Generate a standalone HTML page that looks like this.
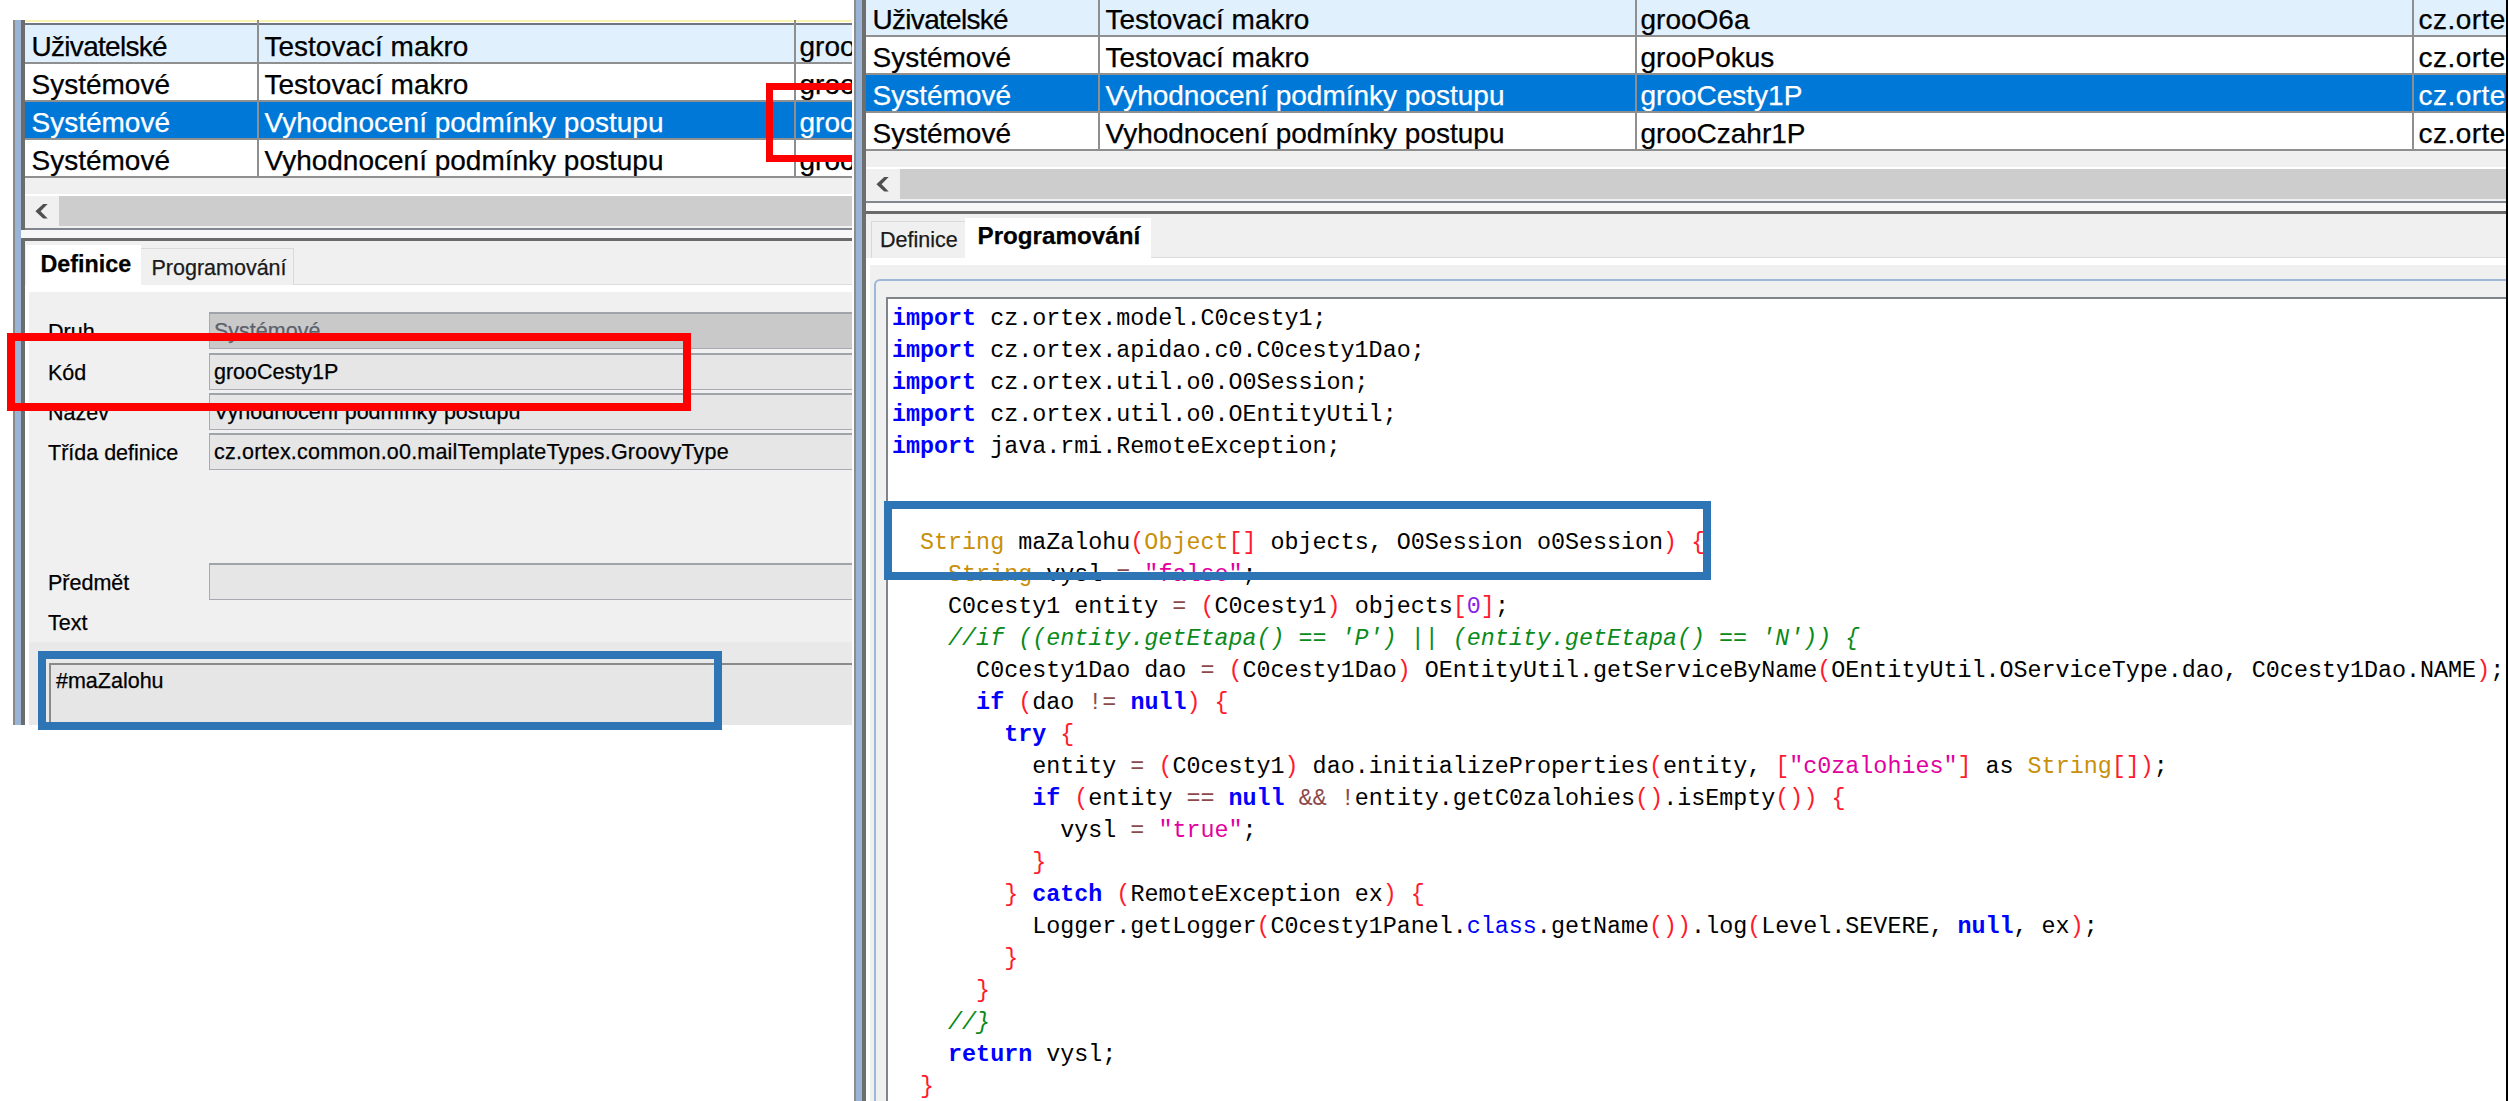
<!DOCTYPE html>
<html><head><meta charset="utf-8">
<style>
html,body{margin:0;padding:0;}
body{width:2508px;height:1101px;overflow:hidden;background:#fff;position:relative;font-family:"Liberation Sans",sans-serif;}
div{position:absolute;box-sizing:border-box;}
.t{white-space:pre;-webkit-text-stroke:0.25px currentColor;}
.code{font-family:"Liberation Mono",monospace;font-size:23.36px;line-height:32px;white-space:pre;color:#000;}
.k{color:#0000ff;font-weight:bold}
.kc{color:#0000ff}
.ty{color:#c8900a}
.p{color:#ff1a2e}
.s{color:#e2009f}
.n{color:#8a1fe8}
.op{color:#8b4a4a}
.c{color:#0a8a1a;font-style:italic}
</style></head><body>
<div style="left:0;top:0;width:852px;height:725px;overflow:hidden;">
<div style="left:13px;top:20px;width:2px;height:705px;background:#8a8a8a;"></div>
<div style="left:15px;top:20px;width:6.3px;height:705px;background:#9ab4d6;"></div>
<div style="left:21.3px;top:20px;width:3.7px;height:705px;background:#6c6c6c;"></div>
<div style="left:25px;top:20px;width:827px;height:2px;background:#fbf3b0;"></div>
<div style="left:25px;top:22.5px;width:827px;height:3.3px;background:#70757f;"></div>
<div style="left:25px;top:25px;width:827px;height:38px;background:#e0f1fd;"></div>
<div class="t" style="left:31.5px;top:32.8px;font-size:28px;line-height:28px;color:#000;font-weight:400;letter-spacing:-0.7px">Uživatelské</div>
<div class="t" style="left:264.5px;top:32.8px;font-size:28px;line-height:28px;color:#000;font-weight:400;">Testovací makro</div>
<div class="t" style="left:799.5px;top:32.8px;font-size:28px;line-height:28px;color:#000;font-weight:400;">grooO6a</div>
<div style="left:25px;top:63px;width:827px;height:38px;background:#ffffff;"></div>
<div class="t" style="left:31.5px;top:70.8px;font-size:28px;line-height:28px;color:#000;font-weight:400;">Systémové</div>
<div class="t" style="left:264.5px;top:70.8px;font-size:28px;line-height:28px;color:#000;font-weight:400;">Testovací makro</div>
<div class="t" style="left:799.5px;top:70.8px;font-size:28px;line-height:28px;color:#000;font-weight:400;">grooPokus</div>
<div style="left:25px;top:101px;width:827px;height:38px;background:#0078d7;"></div>
<div class="t" style="left:31.5px;top:108.8px;font-size:28px;line-height:28px;color:#fff;font-weight:400;">Systémové</div>
<div class="t" style="left:264.5px;top:108.8px;font-size:28px;line-height:28px;color:#fff;font-weight:400;">Vyhodnocení podmínky postupu</div>
<div class="t" style="left:799.5px;top:108.8px;font-size:28px;line-height:28px;color:#fff;font-weight:400;">grooCesty1P</div>
<div style="left:25px;top:139px;width:827px;height:38px;background:#ffffff;"></div>
<div class="t" style="left:31.5px;top:146.8px;font-size:28px;line-height:28px;color:#000;font-weight:400;">Systémové</div>
<div class="t" style="left:264.5px;top:146.8px;font-size:28px;line-height:28px;color:#000;font-weight:400;">Vyhodnocení podmínky postupu</div>
<div class="t" style="left:799.5px;top:146.8px;font-size:28px;line-height:28px;color:#000;font-weight:400;">grooCzahr1P</div>
<div style="left:25px;top:62px;width:827px;height:2px;background:#8f8f8f;"></div>
<div style="left:25px;top:100px;width:827px;height:2px;background:#8f8f8f;"></div>
<div style="left:25px;top:138px;width:827px;height:2px;background:#8f8f8f;"></div>
<div style="left:25px;top:176px;width:827px;height:2px;background:#8f8f8f;"></div>
<div style="left:257px;top:20px;width:2px;height:157px;background:#8f8f8f;"></div>
<div style="left:794px;top:20px;width:2px;height:157px;background:#8f8f8f;"></div>
<div style="left:25px;top:178px;width:827px;height:15.5px;background:#f0f0f0;"></div>
<div style="left:25px;top:193.5px;width:827px;height:2.5px;background:#ffffff;"></div>
<div style="left:25px;top:196px;width:34px;height:30px;background:#f0f0f0;"></div>
<div style="left:59px;top:196px;width:793px;height:30px;background:#cdcdcd;"></div>
<div style="left:25px;top:226px;width:827px;height:1.6px;background:#f0f0f0;"></div>
<div style="left:25px;top:227.6px;width:827px;height:2.4px;background:#82868e;"></div>
<div style="left:21.3px;top:230px;width:830.7px;height:8px;background:#f7f7f7;"></div>
<div style="left:25px;top:238px;width:827px;height:3px;background:#6a6a6a;"></div>
<div style="left:25px;top:241px;width:827px;height:44px;background:#f0f0f0;"></div>
<div style="left:25px;top:285px;width:827px;height:7px;background:#ffffff;"></div>
<div style="left:294px;top:284px;width:558px;height:1px;background:#dcdcdc;"></div>
<div style="left:141px;top:248px;width:153px;height:37px;background:#f0f0f0;border:1px solid #d9d9d9;border-left:none;border-bottom:none;"></div>
<div style="left:26px;top:245px;width:115px;height:47px;background:#ffffff;"></div>
<div class="t" style="left:40.5px;top:252.78px;font-size:23.3px;line-height:23.3px;color:#000;font-weight:700;">Definice</div>
<div class="t" style="left:151.5px;top:257.5px;font-size:21.5px;line-height:21.5px;color:#000;font-weight:400;color:#1a1a1a">Programování</div>
<div style="left:29px;top:292px;width:823px;height:433px;background:#f0f0f0;"></div>
<div style="left:209px;top:312px;width:700px;height:37px;background:#c9c9c9;border:1px solid #a7aab0;border-top:2px solid #a0a3aa;"></div>
<div class="t" style="left:214px;top:321.3px;font-size:21.5px;line-height:21.5px;color:#5c616b;font-weight:400;">Systémové</div>
<div style="left:209px;top:352.5px;width:700px;height:37px;background:#e6e6e6;border:1px solid #a7aab0;border-top:2px solid #a0a3aa;"></div>
<div class="t" style="left:214px;top:361.8px;font-size:21.5px;line-height:21.5px;color:#000;font-weight:400;">grooCesty1P</div>
<div style="left:209px;top:393px;width:700px;height:37px;background:#e6e6e6;border:1px solid #a7aab0;border-top:2px solid #a0a3aa;"></div>
<div class="t" style="left:214px;top:402.3px;font-size:21.5px;line-height:21.5px;color:#000;font-weight:400;">Vyhodnocení podmínky postupu</div>
<div style="left:209px;top:433px;width:700px;height:37px;background:#e6e6e6;border:1px solid #a7aab0;border-top:2px solid #a0a3aa;"></div>
<div class="t" style="left:214px;top:442.3px;font-size:21.5px;line-height:21.5px;color:#000;font-weight:400;letter-spacing:0.2px">cz.ortex.common.o0.mailTemplateTypes.GroovyType</div>
<div style="left:209px;top:562.5px;width:700px;height:37px;background:#e6e6e6;border:1px solid #a7aab0;border-top:2px solid #a0a3aa;"></div>
<div class="t" style="left:48px;top:321.8px;font-size:21.5px;line-height:21.5px;color:#000;font-weight:400;">Druh</div>
<div class="t" style="left:48px;top:362.6px;font-size:21.5px;line-height:21.5px;color:#000;font-weight:400;">Kód</div>
<div class="t" style="left:48px;top:402.8px;font-size:21.5px;line-height:21.5px;color:#000;font-weight:400;">Název</div>
<div class="t" style="left:48px;top:442.6px;font-size:21.5px;line-height:21.5px;color:#000;font-weight:400;">Třída definice</div>
<div class="t" style="left:48px;top:573.1px;font-size:21.5px;line-height:21.5px;color:#000;font-weight:400;">Předmět</div>
<div class="t" style="left:48px;top:612.6px;font-size:21.5px;line-height:21.5px;color:#000;font-weight:400;">Text</div>
<div style="left:29px;top:642px;width:823px;height:83px;background:#e9e9e9;"></div>
<div style="left:49px;top:663px;width:803px;height:70px;background:#e6e6e6;border-left:2px solid #8a8a8a;border-top:2px solid #8a8a8a;"></div>
<div class="t" style="left:56px;top:671.3px;font-size:21.5px;line-height:21.5px;color:#000;font-weight:400;">#maZalohu</div>
<div style="left:766px;top:83px;width:100px;height:79px;background:transparent;border:7.5px solid #ff0000;"></div>
<svg style="position:absolute;left:34.8px;top:203.8px" width="13" height="15" viewBox="0 0 13 15"><path d="M8.2 0 L12.7 0 L5.6 7.25 L12.7 14.5 L8.2 14.5 L0.4 7.25 Z" fill="#505050"/></svg>
</div>
<div style="left:854px;top:0px;width:2px;height:1101px;background:#8c8c8c;"></div>
<div style="left:856px;top:0px;width:6px;height:1101px;background:#9ab4d6;"></div>
<div style="left:862px;top:0px;width:4px;height:1101px;background:#6e6e6e;"></div>
<div style="left:866px;top:0;width:1640px;height:1101px;overflow:hidden;">
<div style="left:0px;top:-2px;width:1640px;height:38px;background:#e0f1fd;"></div>
<div class="t" style="left:6.5px;top:5.8px;font-size:28px;line-height:28px;color:#000;font-weight:400;letter-spacing:-0.7px">Uživatelské</div>
<div class="t" style="left:239.5px;top:5.8px;font-size:28px;line-height:28px;color:#000;font-weight:400;">Testovací makro</div>
<div class="t" style="left:774.5px;top:5.8px;font-size:28px;line-height:28px;color:#000;font-weight:400;">grooO6a</div>
<div class="t" style="left:1552.5px;top:5.8px;font-size:28px;line-height:28px;color:#000;font-weight:400;letter-spacing:0.45px">cz.ortex.groovy</div>
<div style="left:0px;top:36px;width:1640px;height:38px;background:#ffffff;"></div>
<div class="t" style="left:6.5px;top:43.8px;font-size:28px;line-height:28px;color:#000;font-weight:400;">Systémové</div>
<div class="t" style="left:239.5px;top:43.8px;font-size:28px;line-height:28px;color:#000;font-weight:400;">Testovací makro</div>
<div class="t" style="left:774.5px;top:43.8px;font-size:28px;line-height:28px;color:#000;font-weight:400;">grooPokus</div>
<div class="t" style="left:1552.5px;top:43.8px;font-size:28px;line-height:28px;color:#000;font-weight:400;letter-spacing:0.45px">cz.ortex.groovy</div>
<div style="left:0px;top:74px;width:1640px;height:38px;background:#0078d7;"></div>
<div class="t" style="left:6.5px;top:81.8px;font-size:28px;line-height:28px;color:#fff;font-weight:400;">Systémové</div>
<div class="t" style="left:239.5px;top:81.8px;font-size:28px;line-height:28px;color:#fff;font-weight:400;">Vyhodnocení podmínky postupu</div>
<div class="t" style="left:774.5px;top:81.8px;font-size:28px;line-height:28px;color:#fff;font-weight:400;">grooCesty1P</div>
<div class="t" style="left:1552.5px;top:81.8px;font-size:28px;line-height:28px;color:#fff;font-weight:400;letter-spacing:0.45px">cz.ortex.groovy</div>
<div style="left:0px;top:112px;width:1640px;height:38px;background:#ffffff;"></div>
<div class="t" style="left:6.5px;top:119.8px;font-size:28px;line-height:28px;color:#000;font-weight:400;">Systémové</div>
<div class="t" style="left:239.5px;top:119.8px;font-size:28px;line-height:28px;color:#000;font-weight:400;">Vyhodnocení podmínky postupu</div>
<div class="t" style="left:774.5px;top:119.8px;font-size:28px;line-height:28px;color:#000;font-weight:400;">grooCzahr1P</div>
<div class="t" style="left:1552.5px;top:119.8px;font-size:28px;line-height:28px;color:#000;font-weight:400;letter-spacing:0.45px">cz.ortex.groovy</div>
<div style="left:0px;top:35px;width:1640px;height:2px;background:#8f8f8f;"></div>
<div style="left:0px;top:73px;width:1640px;height:2px;background:#8f8f8f;"></div>
<div style="left:0px;top:111px;width:1640px;height:2px;background:#8f8f8f;"></div>
<div style="left:0px;top:149px;width:1640px;height:2px;background:#8f8f8f;"></div>
<div style="left:232px;top:-7px;width:2px;height:157px;background:#8f8f8f;"></div>
<div style="left:769px;top:-7px;width:2px;height:157px;background:#8f8f8f;"></div>
<div style="left:1546px;top:-7px;width:2px;height:157px;background:#8f8f8f;"></div>
<div style="left:0px;top:151px;width:1640px;height:15.5px;background:#f0f0f0;"></div>
<div style="left:0px;top:166.5px;width:1640px;height:2.5px;background:#ffffff;"></div>
<div style="left:0px;top:169px;width:34px;height:30px;background:#f0f0f0;"></div>
<div style="left:34px;top:169px;width:1606px;height:30px;background:#cdcdcd;"></div>
<svg style="position:absolute;left:9.600000000000023px;top:176.8px" width="13" height="15" viewBox="0 0 13 15"><path d="M8.2 0 L12.7 0 L5.6 7.25 L12.7 14.5 L8.2 14.5 L0.4 7.25 Z" fill="#505050"/></svg>
<div style="left:0px;top:199px;width:1640px;height:1.6px;background:#f0f0f0;"></div>
<div style="left:0px;top:200.6px;width:1640px;height:2.4px;background:#82868e;"></div>
<div style="left:-3.7000000000000455px;top:203px;width:1643.7px;height:8px;background:#f7f7f7;"></div>
<div style="left:0px;top:211px;width:1640px;height:3px;background:#6a6a6a;"></div>
<div style="left:0px;top:214px;width:1640px;height:44px;background:#f0f0f0;"></div>
<div style="left:0px;top:258px;width:1640px;height:7px;background:#ffffff;"></div>
<div style="left:285px;top:257px;width:1355px;height:1px;background:#dcdcdc;"></div>
<div style="left:5px;top:221px;width:93.5px;height:37px;background:#f0f0f0;border:1px solid #d9d9d9;border-right:none;border-bottom:none;"></div>
<div style="left:98.5px;top:218px;width:186.5px;height:47px;background:#ffffff;"></div>
<div class="t" style="left:14px;top:230.1px;font-size:21.5px;line-height:21.5px;color:#000;font-weight:400;color:#1a1a1a">Definice</div>
<div class="t" style="left:111.5px;top:224.31px;font-size:24.2px;line-height:24.2px;color:#000;font-weight:700;">Programování</div>
<div style="left:4px;top:265px;width:1640px;height:836px;background:#f0f0f0;"></div>
<div style="left:8px;top:279px;width:1640px;height:830px;background:#f0f0f0;border:2px solid #9cb8d6;border-radius:6px;"></div>
<div style="left:20px;top:297.2px;width:1640px;height:830px;background:#ffffff;border-left:2px solid #80858c;border-top:2px solid #80858c;"></div>
<div class="code" style="left:26px;top:302.8px;"><span class="k">import</span> cz.ortex.model.C0cesty1;
<span class="k">import</span> cz.ortex.apidao.c0.C0cesty1Dao;
<span class="k">import</span> cz.ortex.util.o0.O0Session;
<span class="k">import</span> cz.ortex.util.o0.OEntityUtil;
<span class="k">import</span> java.rmi.RemoteException;


  <span class="ty">String</span> maZalohu<span class="p">(</span><span class="ty">Object</span><span class="p">[</span><span class="p">]</span> objects, O0Session o0Session<span class="p">)</span> <span class="p">{</span>
    <span class="ty">String</span> vysl <span class="op">=</span> <span class="s">&quot;false&quot;</span>;
    C0cesty1 entity <span class="op">=</span> <span class="p">(</span>C0cesty1<span class="p">)</span> objects<span class="p">[</span><span class="n">0</span><span class="p">]</span>;
    <span class="c">//if ((entity.getEtapa() == &#x27;P&#x27;) || (entity.getEtapa() == &#x27;N&#x27;)) {</span>
      C0cesty1Dao dao <span class="op">=</span> <span class="p">(</span>C0cesty1Dao<span class="p">)</span> OEntityUtil.getServiceByName<span class="p">(</span>OEntityUtil.OServiceType.dao, C0cesty1Dao.NAME<span class="p">)</span>;
      <span class="k">if</span> <span class="p">(</span>dao <span class="op">!=</span> <span class="k">null</span><span class="p">)</span> <span class="p">{</span>
        <span class="k">try</span> <span class="p">{</span>
          entity <span class="op">=</span> <span class="p">(</span>C0cesty1<span class="p">)</span> dao.initializeProperties<span class="p">(</span>entity, <span class="p">[</span><span class="s">&quot;c0zalohies&quot;</span><span class="p">]</span> as <span class="ty">String</span><span class="p">[</span><span class="p">]</span><span class="p">)</span>;
          <span class="k">if</span> <span class="p">(</span>entity <span class="op">==</span> <span class="k">null</span> <span class="op">&amp;&amp;</span> <span class="op">!</span>entity.getC0zalohies<span class="p">(</span><span class="p">)</span>.isEmpty<span class="p">(</span><span class="p">)</span><span class="p">)</span> <span class="p">{</span>
            vysl <span class="op">=</span> <span class="s">&quot;true&quot;</span>;
          <span class="p">}</span>
        <span class="p">}</span> <span class="k">catch</span> <span class="p">(</span>RemoteException ex<span class="p">)</span> <span class="p">{</span>
          Logger.getLogger<span class="p">(</span>C0cesty1Panel.<span class="kc">class</span>.getName<span class="p">(</span><span class="p">)</span><span class="p">)</span>.log<span class="p">(</span>Level.SEVERE, <span class="k">null</span>, ex<span class="p">)</span>;
        <span class="p">}</span>
      <span class="p">}</span>
    <span class="c">//}</span>
    <span class="k">return</span> vysl;
  <span class="p">}</span></div>
</div>
<div style="left:2506px;top:0px;width:2px;height:1101px;background:#000000;"></div>
<div style="left:7px;top:333px;width:684px;height:78px;background:transparent;border:8px solid #ff0000;"></div>
<div style="left:38px;top:651px;width:684px;height:78.5px;background:transparent;border:8px solid #2e75b6;"></div>
<div style="left:884px;top:500.5px;width:827px;height:79.5px;background:transparent;border:8.5px solid #2e75b6;"></div>
</body></html>
